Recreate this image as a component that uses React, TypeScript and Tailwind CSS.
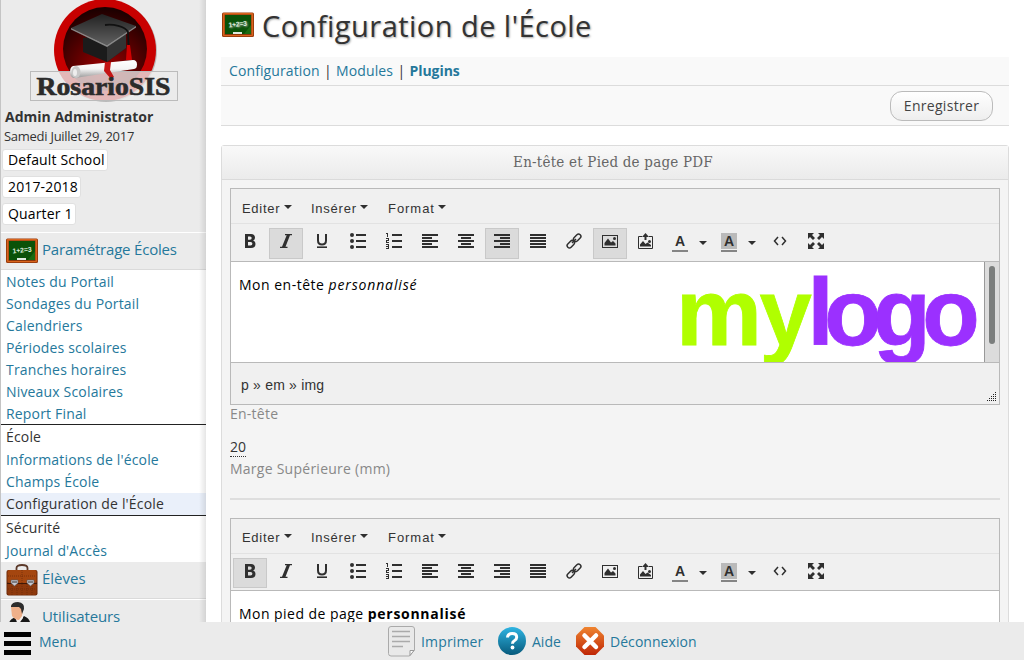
import React from "react";

const sans = "font-['Open_Sans','Noto_Sans',sans-serif]";

function Board() {
  return (
    <svg width="32" height="26" viewBox="0 0 32 26" className="shrink-0">
      <rect x="0" y="0.5" width="32" height="24.5" rx="1.5" fill="#9b3d0e" />
      <rect x="1" y="1" width="30" height="23" rx="1" fill="#d9641c" />
      <rect x="2.5" y="2.5" width="27" height="20.5" fill="#8a360c" />
      <rect x="3" y="3" width="26" height="19" fill="#0a5208" />
      <path d="M22 22l7-9v9z" fill="#1a6b12" />
      <text x="6.500" y="14.500" fontSize="7" fontWeight="bold" fill="#dcebdc" fontFamily="Liberation Sans, sans-serif" textLength="19" transform="rotate(-6 16 13)">1+2=3</text>
      <rect x="11" y="20" width="9" height="2" fill="#dfeadf" />
    </svg>
  );
}

function Emblem() {
  return (
    <svg width="150" height="104" viewBox="0 0 150 104" className="block">
      <defs>
        <radialGradient id="disc" cx=".5" cy=".75" r=".75">
          <stop offset="0" stopColor="#a00000" />
          <stop offset="1" stopColor="#180000" />
        </radialGradient>
        <linearGradient id="cap" x1="0" y1="0" x2="0" y2="1">
          <stop offset="0" stopColor="#222" />
          <stop offset="1" stopColor="#606060" />
        </linearGradient>
        <linearGradient id="roll" x1="0" y1="0" x2="0" y2="1">
          <stop offset="0" stopColor="#fff" />
          <stop offset=".5" stopColor="#f4f4f4" />
          <stop offset="1" stopColor="#999" />
        </linearGradient>
      </defs>
      <circle cx="77" cy="51" r="51" fill="#999" opacity=".6" />
      <circle cx="76" cy="50" r="51" fill="#c80000" />
      <circle cx="76" cy="49" r="42" fill="url(#disc)" />
      <path d="M54 38v14l24 10 19-14V31z" fill="#1b1b1b" />
      <path d="M78 45v17l19-14V32z" fill="#333" />
      <path d="M42 28l31-14 34 12-29 19z" fill="url(#cap)" />
      <path d="M42 28l36 17 29-19v1.500L78 47 42 29.500z" fill="#888" />
      <path d="M76 25c8-1 20 1 23 7l1 23" fill="none" stroke="#111" strokeWidth="1.800" />
      <path d="M98 45h3l2 15h-6z" fill="#d00000" />
      <rect x="1.500" y="71.500" width="147" height="29" fill="#ebebeb" fillOpacity=".78" stroke="#bbb" />
      <path d="M44 66l60-6q4 0 4 4.500 0 4-3 4.500l-59 9q-5 0-5-6 0-5 3-6z" fill="url(#roll)" />
      <ellipse cx="47" cy="72" rx="4.500" ry="6" fill="#c9c9c9" />
      <ellipse cx="46" cy="72.500" rx="2" ry="3.500" fill="#eee" />
      <path d="M76 62l6 0-1 8 4 7-3 2-7-8z" fill="#c41414" />
      <text x="7.500" y="95" fontSize="25" fontWeight="bold" fontFamily="Liberation Serif, serif" fill="#2b2b2b" stroke="#2b2b2b" strokeWidth=".6" textLength="134" lengthAdjust="spacingAndGlyphs">RosarioSIS</text>
    </svg>
  );
}

function Briefcase() {
  return (
    <svg width="32" height="32" viewBox="0 0 32 32" className="shrink-0">
      <path d="M10.500 6V4q0-3 5.500-3t5.500 3v2" fill="none" stroke="#5c3a2a" strokeWidth="1.800" />
      <rect x="0.500" y="6" width="31" height="25.500" rx="2" fill="#6f2a08" />
      <rect x="1.500" y="6" width="29" height="13" rx="2" fill="#a4460f" />
      <path d="M1.500 20h29v9q0 2-2 2h-25q-2 0-2-2z" fill="#8d390c" />
      <path d="M6 20v11M11 20v11M16 6v25M21 20v11M26 20v11M2 25h28M2 12h28" stroke="#6b2a09" strokeWidth=".7" strokeDasharray="1 1" />
      <path d="M1 19.500h30" stroke="#401804" />
      <path d="M5 16h7v3l-3.500 3L5 19zM21 16h7v3l-3.500 3L21 19z" fill="#c9c9d0" stroke="#555" strokeWidth=".6" />
      <path d="M6 18h5M22 18h5" stroke="#333" />
    </svg>
  );
}

function Person() {
  return (
    <svg width="32" height="32" viewBox="0 0 32 32" className="shrink-0">
      <path d="M3 21q1-4 7-6l4 4 4-5q5 2 6 6v12H2z" fill="#181818" />
      <path d="M9 15l3 8 5-7v-4H9z" fill="#f4f0ee" />
      <path d="M5 5q0-4 6-4 6 1 6 6l-1 7-3 4q-4 0-7-4z" fill="#eeb08a" />
      <path d="M5 4q1-4 7-4 7 1 6 7l-2 5-1-5-2-2-8 0z" fill="#2c2c2c" />
    </svg>
  );
}

const ink = "#2f2f2f";

function Glyph({ name }: { name: string }) {
  if (name === "B")
    return (
      <svg width="16" height="16" viewBox="0 0 16 16">
        <path fillRule="evenodd" fill={ink} d="M3 1h6q4 0 4 3.800 0 2-1.800 2.800Q13.500 8.500 13.500 11q0 4-4.500 4H3zM6 3.500v3.200h2q1.700 0 1.700-1.600T8 3.500zM6 9v3.500h2.500q1.900 0 1.900-1.800T8.500 9z" />
      </svg>
    );
  if (name === "I")
    return (
      <svg width="16" height="16" viewBox="0 0 16 16">
        <path fill={ink} d="M7 1h7v1.200h-2L7.500 13.800h2V15H2v-1.200h2L8.700 2.200H7z" />
      </svg>
    );
  if (name === "U")
    return (
      <svg width="16" height="16" viewBox="0 0 16 16" fill="none" stroke={ink}>
        <path d="M4 1v6.500q0 4 4 4t4-4V1" strokeWidth="2" />
        <path d="M3 14.200h10" strokeWidth="1.600" />
      </svg>
    );
  if (name === "ul")
    return (
      <svg width="16" height="16" viewBox="0 0 16 16" fill={ink}>
        <circle cx="2" cy="2" r="2" /><circle cx="2" cy="8" r="2" /><circle cx="2" cy="14" r="2" />
        <path d="M6 1h10v2H6zM6 7h10v2H6zM6 13h10v2H6z" />
      </svg>
    );
  if (name === "ol")
    return (
      <svg width="16" height="16" viewBox="0 0 16 16" fill="none" stroke={ink}>
        <path d="M6 2h10M6 8h10M6 14h10" strokeWidth="2" />
        <path d="M0 .5h2M1.500 0v4M0 5.500h3M2.500 5v2M3 7.500H0M.5 8v2M0 9.500h3M0 11.500h3M2.500 12v4M0 13.500h3M0 15.500h3" shapeRendering="crispEdges" />
      </svg>
    );
  if (name === "al" || name === "ac" || name === "ar" || name === "aj") {
    const widths = name === "aj" ? [16, 16, 16, 16, 16] : [16, 10, 16, 10, 16];
    return (
      <svg width="16" height="16" viewBox="0 0 16 16" fill={ink} shapeRendering="crispEdges">
        {widths.map((w, i) => (
          <rect key={i} x={name === "ar" ? 16 - w : name === "ac" ? (16 - w) / 2 : 0} y={1 + i * 3} width={w} height="2" />
        ))}
      </svg>
    );
  }
  if (name === "link")
    return (
      <svg width="16" height="16" viewBox="0 0 16 16" fill="none" stroke={ink} strokeWidth="1.500">
        <rect x="-4.200" y="-2.300" width="8.400" height="4.600" rx="2.300" transform="translate(11.200 4.800) rotate(-45)" />
        <rect x="-4.200" y="-2.300" width="8.400" height="4.600" rx="2.300" transform="translate(4.800 11.200) rotate(-45)" />
        <path d="M6 10l4-4" />
      </svg>
    );
  if (name === "img")
    return (
      <svg width="16" height="16" viewBox="0 0 16 16">
        <rect x=".5" y="2.500" width="15" height="12" fill="none" stroke={ink} />
        <path d="M2.500 12.500V10L6 5.500 9 9.500 11 8l2.500 2.500v2z" fill={ink} />
        <circle cx="12.500" cy="5.500" r="1.500" fill={ink} />
      </svg>
    );
  if (name === "imgup")
    return (
      <svg width="16" height="16" viewBox="0 0 16 16">
        <path d="M4 3.500H.5v12h14v-12H11" fill="none" stroke={ink} />
        <path d="M7.500 0L11 4H8.500v3h-2V4H4z" fill={ink} />
        <path d="M2 13.500v-2L5 8l2.500 3 2-1.500 3.500 2.500v1.500z" fill={ink} />
        <circle cx="11.500" cy="8.500" r="1.500" fill={ink} />
      </svg>
    );
  if (name === "fg" || name === "bg")
    return (
      <svg width="16" height="20" viewBox="0 0 16 20">
        {name === "bg" && <rect width="16" height="16" fill="#bababa" />}
        <text x="8" y="13" textAnchor="middle" fontSize="14" fontWeight="bold" fill={ink} fontFamily="Liberation Sans, sans-serif">A</text>
        <rect y="17" width="16" height="2" fill="#858585" />
      </svg>
    );
  if (name === "code")
    return (
      <svg width="16" height="16" viewBox="0 0 16 16" fill="none" stroke={ink} strokeWidth="1.500">
        <path d="M6 4L2.500 8 6 12M10 4l3.500 4L10 12" />
      </svg>
    );
  return (
    <svg width="16" height="16" viewBox="0 0 16 16" fill={ink}>
      <path d="M0 0h6L4 2l3 3-2 2-3-3-2 2zM16 0v6l-2-2-3 3-2-2 3-3-2-2zM0 16v-6l2 2 3-3 2 2-3 3 2 2zM16 16h-6l2-2-3-3 2-2 3 3 2-2z" />
    </svg>
  );
}

function Caret() {
  return (
    <svg width="8" height="4" viewBox="0 0 8 4"><path d="M0 0h8L4 4z" fill={ink} /></svg>
  );
}

const tools = ["B", "I", "U", "ul", "ol", "al", "ac", "ar", "aj", "link", "img", "imgup", "fg", "bg", "code", "full"];
const menus = [
  { label: "Editer", width: "w-[69px]", spacing: "tracking-[0.700px]" },
  { label: "Insérer", width: "w-[77px]", spacing: "tracking-[0.750px]" },
  { label: "Format", width: "w-[77px]", spacing: "tracking-[0.950px]" },
];

function Editor({ active, children, tall }: { active: string[]; children: React.ReactNode; tall?: boolean }) {
  return (
    <div className="w-[770px] border border-[#b9b9b9] bg-[#f0f0f0]">
      <div className={`flex h-[35px] items-center border-b border-[#e2e2e2] pl-[11px] font-['Liberation_Sans',sans-serif] text-[13px] text-[#333] ${tall ? "pt-[5px]" : "pt-[3px]"}`}>
        {menus.map((m) => (
          <div key={m.label} className={`flex items-center ${m.width}`}>
            <span className={m.spacing}>{m.label}</span>
            <span className="mb-1 ml-[3.500px]"><Caret /></span>
          </div>
        ))}
      </div>
      <div className={`flex items-start border-b border-[#b9b9b9] pl-px ${tall ? "h-[38px]" : "h-[37px]"}`}>
        {tools.map((t) => {
          const wide = t === "fg" || t === "bg";
          return (
            <div
              key={t}
              className={`mx-px mt-1 flex shrink-0 items-start border pt-1 ${tall ? "h-[31px]" : "h-[30px]"} ${wide ? "w-[47px] pl-[6px]" : "w-[34px] justify-center"} ${active.includes(t) ? "border-[#c9c9c9] bg-[#dbdbdb]" : "border-transparent"}`}
            >
              <Glyph name={t} />
              {wide && <span className="ml-[11px] mt-2 flex"><Caret /></span>}
            </div>
          );
        })}
      </div>
      {children}
    </div>
  );
}

function Item({ children, plain }: { children: React.ReactNode; plain?: boolean }) {
  return <div className={`flex h-[22px] items-center whitespace-nowrap pb-[2px] pl-[5px] tracking-[0.170px] ${plain ? "text-[#333]" : "text-[#25789b]"}`}>{children}</div>;
}

function Select({ children }: { children: React.ReactNode }) {
  return (
    <div className="mb-[5px] ml-px flex h-[22px] w-fit items-center rounded-[3px] border border-[#e0e0e0] bg-white pb-[2px] pl-[5px] pr-[2px] text-[14px] tracking-[0.150px] text-black">
      {children}
    </div>
  );
}

function Sidebar() {
  return (
    <aside className="relative h-full w-[206px] shrink-0 overflow-hidden border-l border-[#c4c4c4] bg-[#ebebeb] text-[14px]">
      <div className="h-[106px] pl-[28px]"><Emblem /></div>
      <div className="flex h-5 items-center whitespace-nowrap pl-1 font-bold text-[#333]">Admin Administrator</div>
      <div className="flex h-[22px] items-start whitespace-nowrap pl-[3px] text-[13px] leading-5 tracking-[-0.270px] text-[#333]">Samedi Juillet 29, 2017</div>
      <div className="h-[84px] pt-px">
        <Select>Default School</Select>
        <Select>2017-2018</Select>
        <Select>Quarter 1</Select>
      </div>
      <div className="flex h-[38px] items-center gap-1 border-b border-t border-b-[#dadada] border-t-white pl-[5px] text-[15px] tracking-[-0.200px] text-[#25789b]">
        <Board /><span className="pb-1">Paramétrage Écoles</span>
      </div>
      <div className="h-[292px] bg-white pt-px">
        <Item>Notes du Portail</Item>
        <Item>Sondages du Portail</Item>
        <Item>Calendriers</Item>
        <Item>Périodes scolaires</Item>
        <Item>Tranches horaires</Item>
        <Item>Niveaux Scolaires</Item>
        <div className="h-[21px]"><Item>Report Final</Item></div>
        <div className="h-[25px] border-t border-[#222] pt-px"><Item plain>École</Item></div>
        <Item>Informations de l'école</Item>
        <Item>Champs École</Item>
        <div className="bg-[#eaf0fa]"><Item plain>Configuration de l'École</Item></div>
        <div className="h-[25px] border-t border-[#222] pt-px"><Item plain>Sécurité</Item></div>
        <Item>Journal d'Accès</Item>
      </div>
      <div className="flex h-[37px] items-center gap-1 border-b border-[#dadada] pl-[5px] text-[15px] text-[#25789b]">
        <Briefcase /><span className="pb-1">Élèves</span>
      </div>
      <div className="flex h-[37px] items-center gap-1 border-t border-white pl-[5px] pt-1 text-[15px] tracking-[-0.100px] text-[#25789b]">
        <span className="-mt-1"><Person /></span><span className="pb-[7px]">Utilisateurs</span>
      </div>
      <div className="absolute inset-y-0 right-0 w-[7px] bg-gradient-to-r from-transparent to-black/10" />
    </aside>
  );
}

function BrandMark() {
  return (
    <svg width="310" height="100" viewBox="0 0 310 100" className="ml-auto block shrink-0" fontFamily="Liberation Sans, sans-serif" fontSize="94" fontWeight="bold" strokeWidth=".8">
      <text x="2" y="83" fill="#b0ff00" stroke="#b0ff00" textLength="86" lengthAdjust="spacingAndGlyphs">m</text>
      <text x="85.500" y="83" fill="#b0ff00" stroke="#b0ff00">y</text>
      <text x="133.500 150.300 199.300 248.300" y="83" fill="#9b30ff" stroke="#9b30ff">logo</text>
    </svg>
  );
}

function Footer() {
  return (
    <footer className="flex h-[38px] shrink-0 items-center bg-[#ebebeb] text-[14px] text-[#25789b]">
      <div className="flex w-[388px] items-center gap-2 pl-1">
        <svg width="27" height="24" viewBox="0 0 27 24" className="mt-[5px]"><path d="M0 0h27v5H0zM0 9h27v5H0zM0 18h27v5H0z" fill="#000" /></svg>
        <span>Menu</span>
      </div>
      <svg width="27" height="31" viewBox="0 0 27 31">
        <path d="M3 .5h21q2.500 0 2.500 2.500v21l-5 6H3Q.5 30 .5 27.500V3Q.5.500 3 .500z" fill="#e9e9e9" stroke="#aaa" />
        <path d="M4 5.500h18M4 10.500h18M4 15.500h18M4 20.500h11" stroke="#aaa" strokeWidth="1.300" />
        <path d="M26 24.500h-4v5z" fill="#fff" stroke="#999" />
      </svg>
      <span className="ml-1.5 w-[77px] tracking-[0.150px]">Imprimer</span>
      <svg width="28" height="28" viewBox="0 0 28 28">
        <defs><linearGradient id="help" x1="0" y1="0" x2="0" y2="1"><stop offset="0" stopColor="#2fb4e2" /><stop offset="1" stopColor="#075a7c" /></linearGradient></defs>
        <circle cx="14" cy="14" r="14" fill="url(#help)" />
        <path d="M9.500 10.500q.3-4 4.700-4 4.500 0 4.500 3.800 0 2-2.400 3.500-1.800 1-1.800 3" fill="none" stroke="#fff" strokeWidth="3" />
        <circle cx="14.500" cy="20.500" r="1.900" fill="#fff" />
      </svg>
      <span className="ml-1.5 w-[44px]">Aide</span>
      <svg width="28" height="28" viewBox="0 0 28 28">
        <defs><linearGradient id="stop" x1="0" y1="0" x2="0" y2="1"><stop offset="0" stopColor="#ef8430" /><stop offset="1" stopColor="#bf2606" /></linearGradient></defs>
        <path d="M8.500 0h11L28 8.500v11L19.500 28h-11L0 19.500v-11z" fill="url(#stop)" />
        <path d="M8.500 8.500l11.500 11.500M20 8.500L8.500 20" stroke="#fff" strokeWidth="4.500" strokeLinecap="round" />
      </svg>
      <span className="ml-1.5 tracking-[0.050px]">Déconnexion</span>
    </footer>
  );
}

export default function App() {
  return (
    <div className={`flex h-[660px] w-[1024px] flex-col overflow-hidden bg-white ${sans}`}>
      <div className="flex h-[622px] overflow-hidden">
        <Sidebar />
        <main className="flex w-[818px] flex-col pl-[15px] pr-[15px]">
          <h1 className="flex h-[57px] shrink-0 items-start gap-2 pl-px text-[29px] leading-[52px] tracking-[0.460px] text-[#333] [text-shadow:1px_1px_2px_#aaa]">
            <span className="mt-3"><Board /></span>
            <span className="whitespace-nowrap">Configuration de l'École</span>
          </h1>
          <nav className="flex h-[29px] shrink-0 items-center gap-[4.300px] border-b border-[#dcdcdc] bg-[#f9f9f9] pb-[2px] pl-2 text-[14px] text-[#25789b]">
            <span className="tracking-[0.100px]">Configuration</span><span className="text-[#333]">|</span><span className="tracking-[0.150px]">Modules</span><span className="text-[#333]">|</span><span className="font-bold tracking-[-0.050px]">Plugins</span>
          </nav>
          <div className="mb-[19px] flex h-10 shrink-0 items-center justify-end border-b border-[#dcdcdc] bg-[#f9f9f9] pr-4">
            <button className="h-[30px] w-[103px] rounded-[12px] border border-[#bbb] bg-gradient-to-b from-white to-[#eee] text-[14px] tracking-[0.300px] text-[#444]">Enregistrer</button>
          </div>
          <section className="h-[600px] shrink-0 rounded-t-[3px] border border-[#dcdcdc] bg-[#f4f4f4]">
            <h2 className="flex h-[34px] items-center justify-center border-b border-[#dadada] bg-gradient-to-b from-[#f9f9f9] to-[#ebebeb] pr-1 font-['DejaVu_Serif_Condensed','DejaVu_Serif',serif] text-[15px] tracking-[0.220px] text-[#666]">En-tête et Pied de page PDF</h2>
            <div className="px-2 pt-2 text-[14px]">
              <Editor active={["I", "ar", "img"]} tall>
                <div className="flex h-[100px] overflow-hidden bg-white">
                  <div className="flex w-[753px] pl-2 text-black">
                    <p className="whitespace-nowrap pt-3 tracking-[0.500px]">Mon en-tête <em className="tracking-[0.850px]">personnalisé</em></p>
                    <BrandMark />
                  </div>
                  <div className="w-[15px] border-l border-[#999] bg-[#dcdcdc] pl-1 pt-1"><div className="h-[78px] w-1.5 rounded-full bg-[#7b7e7d]" /></div>
                </div>
                <div className="flex h-[42px] items-center justify-between border-t border-[#b9b9b9] pl-[10px] pr-[2px] font-['Liberation_Sans',sans-serif] text-[14px] text-[#333]">
                  <span className="pt-1 tracking-[0.200px]">p » em » img</span>
                  <svg width="10" height="10" viewBox="0 0 10 10" className="mb-[3px] self-end" shapeRendering="crispEdges">
                    {[0, 1, 2, 3, 4].map((r) => Array.from({ length: r + 1 }, (_, c) => <rect key={`${r}-${c}`} x={8 - c * 2} y={r * 2 + 1} width="1" height="1" fill="#222" />))}
                  </svg>
                </div>
              </Editor>
              <div className="h-[33px] leading-[18px] tracking-[0.250px] text-[#888]">En-tête</div>
              <div className="flex h-[22px] items-start"><span className="border-b border-dotted border-[#333] leading-[18px] text-[#333]">20</span></div>
              <div className="h-[38px] leading-[18px] tracking-[0.250px] text-[#888]">Marge Supérieure (mm)</div>
              <div className="mb-[18px] h-[2px] bg-[#dedede]" />
              <Editor active={["B"]}>
                <div className="h-[100px] bg-white pl-2 pt-3 tracking-[0.460px] text-black">Mon pied de page <b className="tracking-[0.720px]">personnalisé</b></div>
              </Editor>
            </div>
          </section>
        </main>
      </div>
      <Footer />
    </div>
  );
}
